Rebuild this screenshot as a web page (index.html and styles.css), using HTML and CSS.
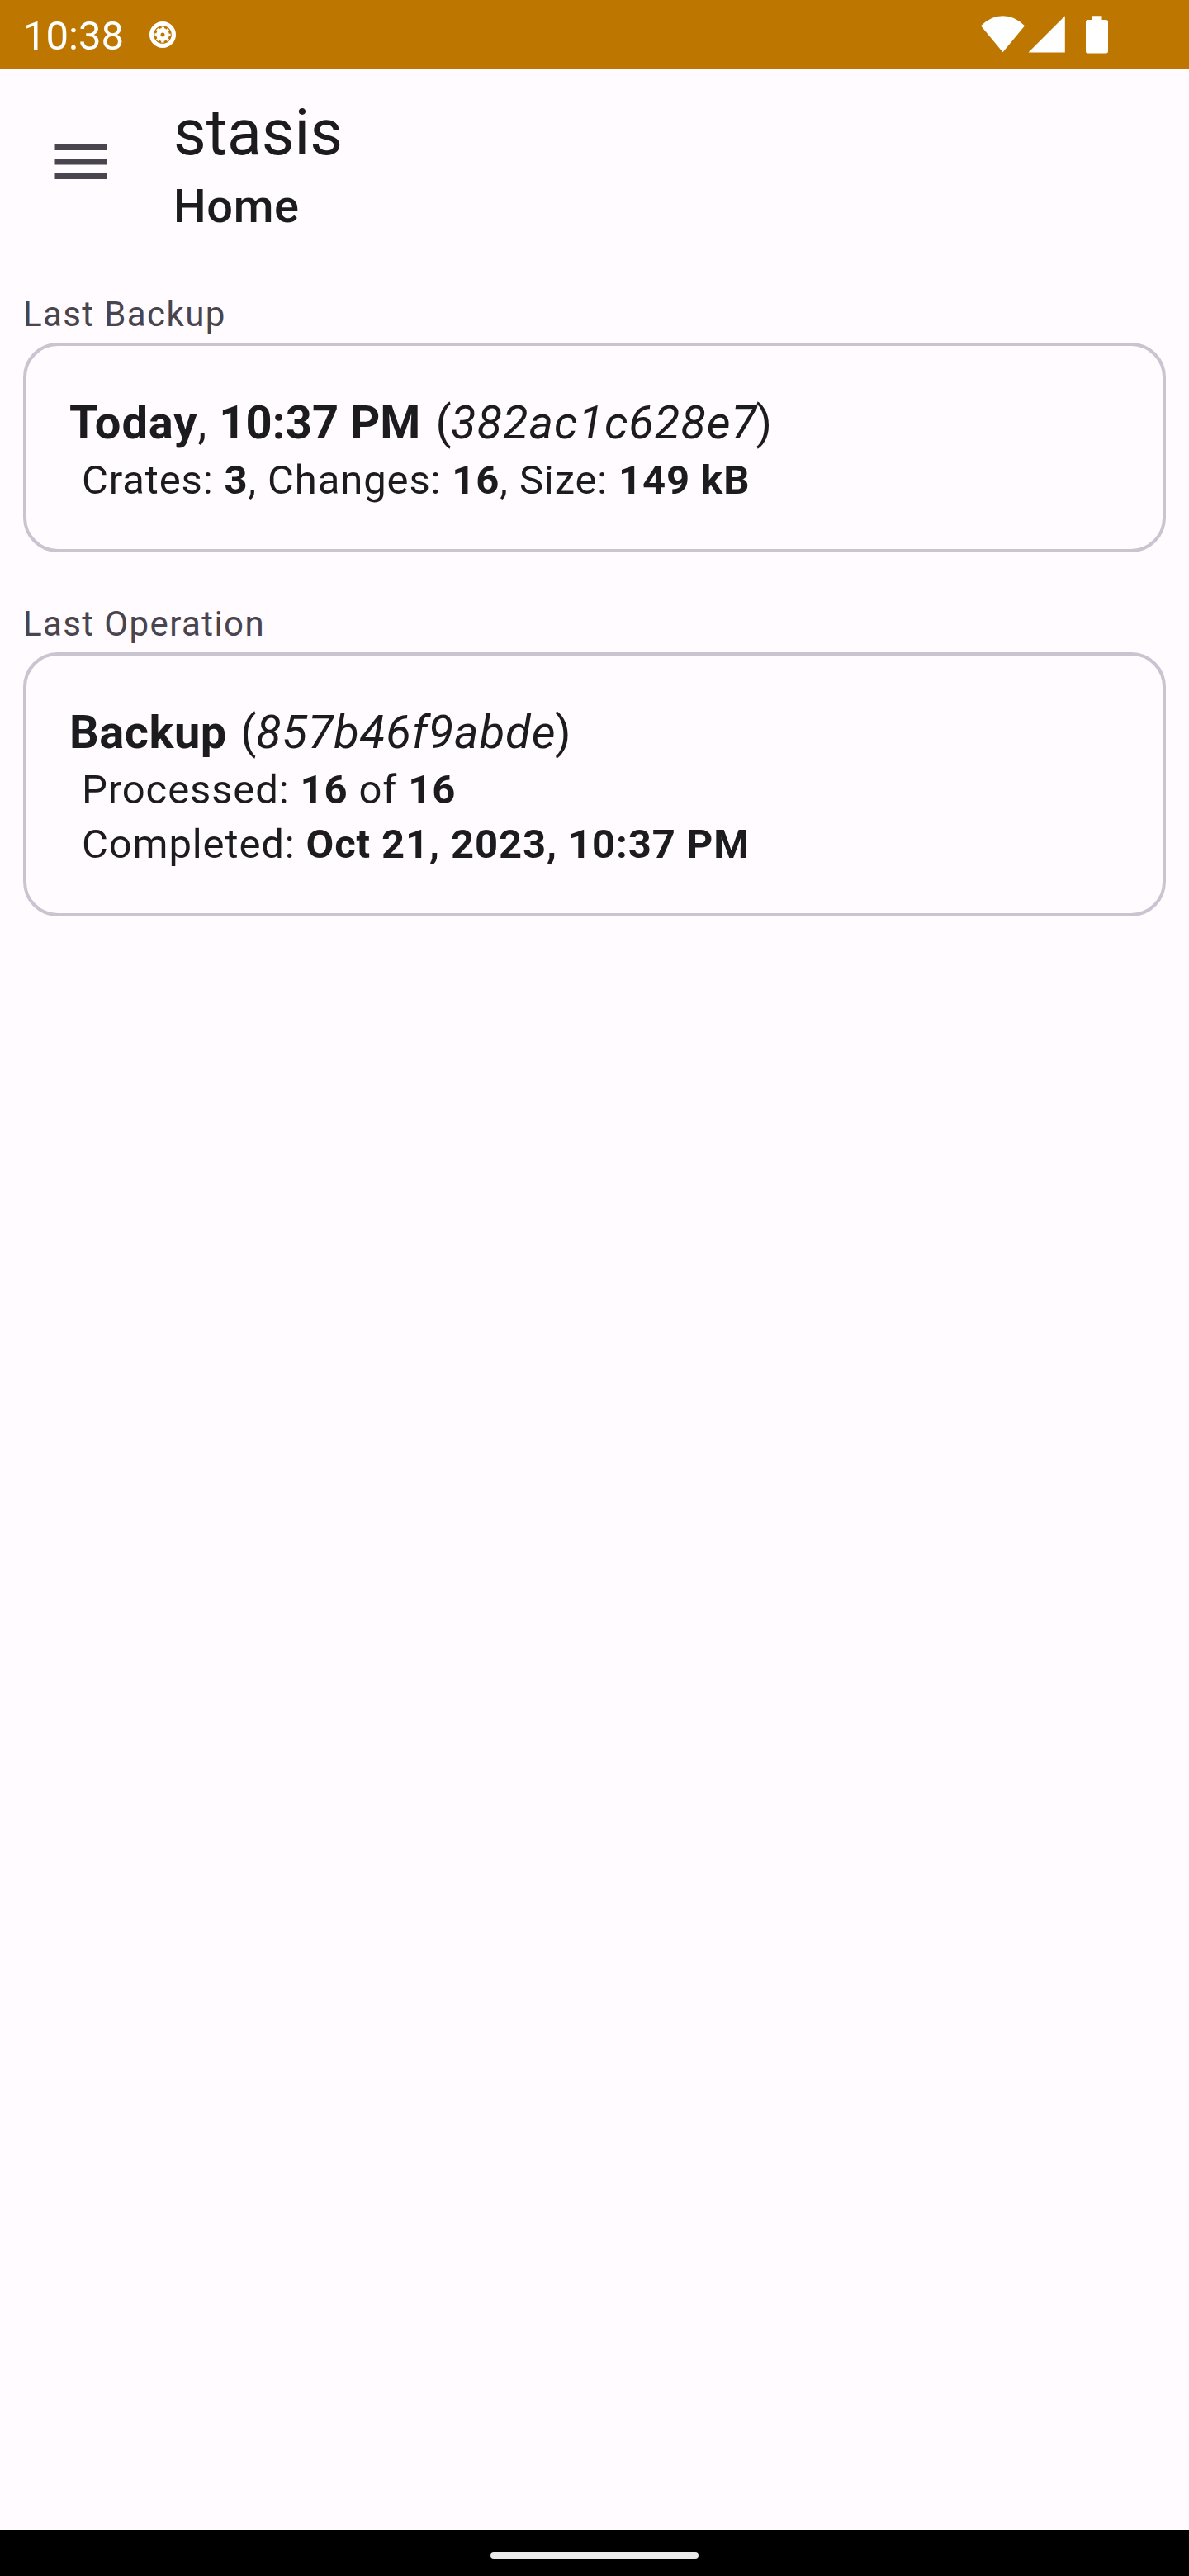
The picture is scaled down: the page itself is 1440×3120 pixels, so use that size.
FILE: index.html
```html
<!DOCTYPE html>
<html lang="en">
<head>
<meta charset="utf-8">
<title>stasis</title>
<link rel="stylesheet" href="styles.css">
</head>
<body>
<div class="screen">
  <div class="status-bar">
    <span class="clock">10:38</span>
    <svg class="notification" width="34" height="34" viewBox="-17 -17 34 34" fill="none" stroke="#fff">
      <circle r="13.4" stroke-width="5.2"/>
      <circle r="5.2" stroke-width="5.4"/>
      <circle r="8.4" stroke-width="2.4" stroke-dasharray="3.3 3.298" stroke-dashoffset="1.65"/>
    </svg>
    <svg class="indicators" width="160" height="84" viewBox="0 0 160 84" fill="#fff">
      <path d="M0 31.3Q11.5 19.2 26.5 19.2T53 31.3L26.5 63.3Z"/>
      <path d="M57.5 63.5H101.8V19.2Z"/>
      <path d="M135 19.2H146.5V24H151.5Q154 24 154 26.5V62Q154 64.5 151.5 64.5H129.5Q127 64.5 127 62V26.5Q127 24 129.5 24H135Z"/>
    </svg>
  </div>
  <header class="app-bar">
    <svg class="menu" width="84" height="84" viewBox="0 0 24 24" fill="#49454f">
      <path d="M3 18h18v-2H3v2zm0-5h18v-2H3v2zm0-7v2h18V6H3z"/>
    </svg>
    <div class="titles">
      <div class="app-name">stasis</div>
      <div class="page-name">Home</div>
    </div>
  </header>
  <main class="content">
    <section>
      <div class="label">Last Backup</div>
      <div class="card">
        <div class="primary"><b class="day">Today</b>, <b class="time">10:37 PM</b> <span class="id">(<i>382ac1c628e7</i>)</span></div>
        <div class="secondary">Crates: <b>3</b>, Changes: <b>16</b>, Size: <b>149 kB</b></div>
      </div>
    </section>
    <section>
      <div class="label">Last Operation</div>
      <div class="card">
        <div class="primary"><b>Backup</b> <span class="id">(<i>857b46f9abde</i>)</span></div>
        <div class="secondary">Processed: <b>16</b> of <b>16</b></div>
        <div class="secondary">Completed: <b>Oct 21, 2023, 10:37 PM</b></div>
      </div>
    </section>
  </main>
  <div class="nav-bar"><div class="handle"></div></div>
</div>
</body>
</html>
```
FILE: styles.css
```css
* { box-sizing: border-box; }
body {
  margin: 0;
  background: #fffbff;
  color: #1c1b1f;
  font-family: Roboto, "Liberation Sans", sans-serif;
}
.screen {
  display: flex;
  flex-direction: column;
  width: 1440px;
  height: 3120px;
}
.status-bar {
  display: flex;
  align-items: center;
  height: 84px;
  padding: 0 92px 0 28px;
  background: #bd7600;
  color: #fff;
}
.clock {
  width: 152px;
  padding-top: 4px;
  font-size: 49px;
  line-height: 60px;
}
.indicators { margin-left: auto; }
.app-bar {
  display: flex;
  align-items: center;
  height: 224px;
  padding-left: 56px;
}
.titles {
  align-self: flex-start;
  padding: 30px 0 0 70px;
}
.app-name {
  font-size: 77px;
  line-height: 95px;
}
.page-name {
  font-size: 56px;
  font-weight: 500;
  line-height: 82px;
  letter-spacing: 0.6px;
}
.content {
  display: flex;
  flex: 1;
  flex-direction: column;
  gap: 59px;
  padding: 45px 28px 0;
}
.label {
  margin-bottom: 6px;
  color: #49454f;
  font-size: 42px;
  line-height: 56px;
  letter-spacing: 1.4px;
}
.card {
  padding: 56px 52px 50px;
  border: 4px solid #cac4d0;
  border-radius: 42px;
}
.primary {
  font-size: 56px;
  line-height: 74px;
  letter-spacing: 0.525px;
}
.day { letter-spacing: 0.9px; }
.time {
  margin-right: 1.5px;
  letter-spacing: 0.1px;
}
.id { margin-left: 2px; }
.id i {
  margin: 0 -1.5px 0 -1px;
  letter-spacing: 0.96px;
}
.secondary {
  padding-left: 15px;
  font-size: 49px;
  line-height: 66px;
  letter-spacing: 0.875px;
}
.nav-bar {
  display: flex;
  align-items: center;
  justify-content: center;
  height: 56px;
  background: #000;
}
.handle {
  width: 252px;
  height: 8px;
  margin-top: 6px;
  border-radius: 4px;
  background: #ebebeb;
}
```
